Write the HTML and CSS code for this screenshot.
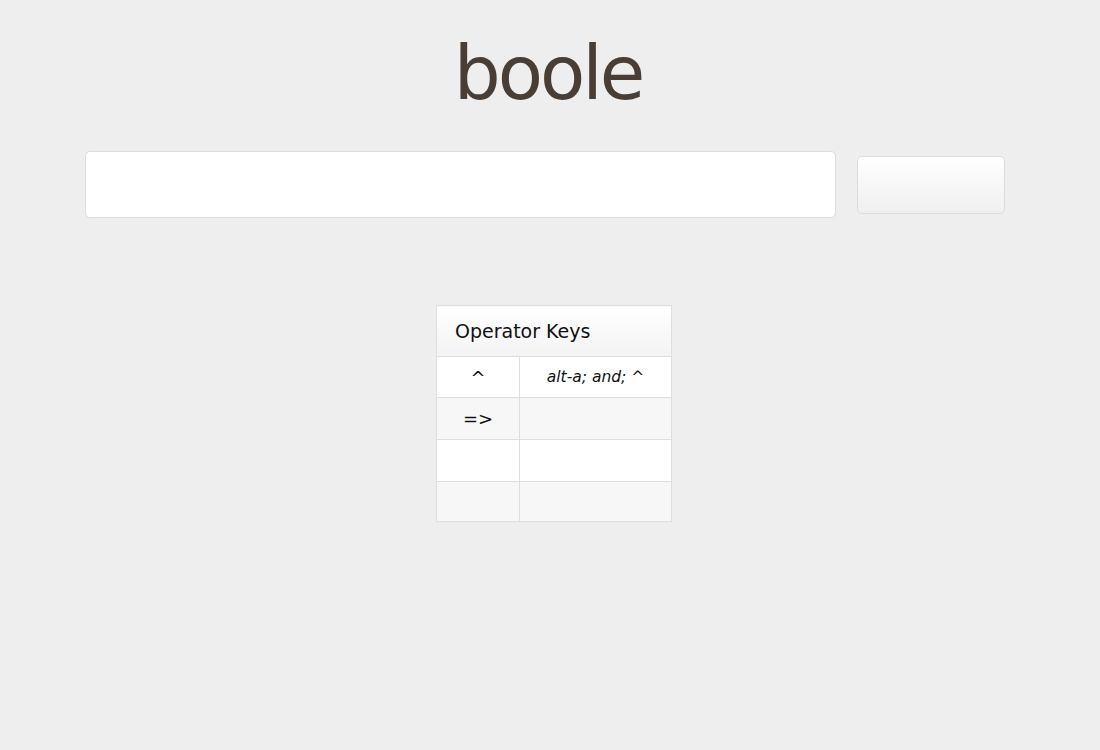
FILE: index.html
```html
<!DOCTYPE html>
<html>
<head>
<meta charset="utf-8">
<link rel="stylesheet" href="styles.css">
</head>
<body>
<div class="page">
  <h1 class="title">boole</h1>
  <div class="bar">
    <input class="expr" type="text">
    <button class="go"></button>
  </div>
  <table class="keys">
    <thead>
      <tr><th colspan="2">Operator Keys</th></tr>
    </thead>
    <tbody>
      <tr class="first"><td class="op">^</td><td class="alt">alt-a; and; ^</td></tr>
      <tr class="odd"><td class="op">=&gt;</td><td class="alt"></td></tr>
      <tr><td class="op"></td><td class="alt"></td></tr>
      <tr class="odd last"><td class="op"></td><td class="alt"></td></tr>
    </tbody>
  </table>
</div>
</body>
</html>
```

FILE: styles.css
```css
html, body {
  margin: 0;
  padding: 0;
  background: #eeeeee;
  font-family: "DejaVu Sans", "Liberation Sans", sans-serif;
}
.page {
  width: 920px;
  margin-left: 85px;
  padding-top: 18px;
}
.title {
  margin: 0;
  text-align: center;
  font-weight: normal;
  font-size: 74px;
  letter-spacing: -3px;
  line-height: 110px;
  color: #483e36;
  padding-left: 6px;
  height: 133px;
}
.bar {
  display: flex;
  align-items: center;
  gap: 21px;
}
.expr {
  box-sizing: border-box;
  width: 751px;
  height: 67px;
  margin: 0;
  border: 1px solid #dcdcdc;
  border-radius: 5px;
  background: #ffffff;
  outline: none;
  padding: 0 12px;
  font-size: 20px;
}
.go {
  box-sizing: border-box;
  width: 148px;
  height: 58px;
  margin: 0;
  border: 1px solid #dcdcdc;
  border-radius: 5px;
  background: linear-gradient(#ffffff, #efefef);
}
.keys {
  margin-top: 87px;
  margin-left: 351px;
  border-collapse: collapse;
  background: #ffffff;
  border: 1px solid #dedede;
  width: 236px;
}
.keys th {
  height: 51px;
  padding: 0 0 0 18px;
  text-align: left;
  font-weight: normal;
  font-size: 19px;
  color: #111;
  background: linear-gradient(#ffffff, #f3f3f3);
  border-bottom: 1px solid #dedede;
  box-sizing: border-box;
}
.keys td {
  height: 42px;
  padding: 0;
  border-top: 1px solid #dedede;
  text-align: center;
  color: #111;
  box-sizing: border-box;
}
.keys tr.first td {
  height: 41px;
}
.keys tr.last td {
  height: 40px;
}
.keys td.op {
  width: 83px;
  border-right: 1px solid #dedede;
  font-size: 18px;
}
.keys td.alt {
  font-style: italic;
  font-size: 15.5px;
}
.keys tr.odd td {
  background: #f7f7f7;
}
```
